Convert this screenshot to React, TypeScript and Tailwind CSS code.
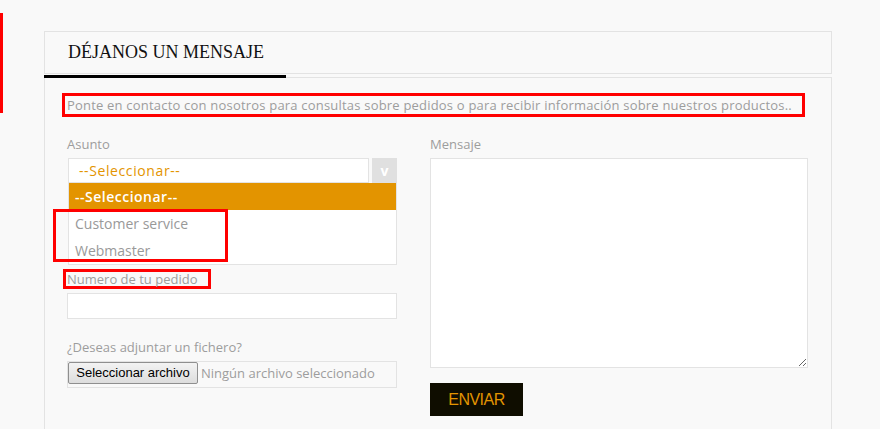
const body = { fontFamily: '"Open Sans", "Noto Sans", sans-serif' };

const Label: React.FC<{ children: React.ReactNode }> = ({ children }) => (
  <div className="h-[18px] text-[13px] leading-[18px] text-[#9d9d9d]" style={body}>
    {children}
  </div>
);

export default function App() {
  return (
    <div className="relative min-h-[429px] bg-[#f9f9f9]">
      {/* annotation line */}
      <div className="absolute left-0 top-[13px] h-[100px] w-[3px] bg-[#ff0000]" />

      <div className="ml-[44px] w-[788px] pt-[31px]">
        <div className="flex h-[43px] items-center border border-[#e3e3e3] pl-[23px]">
          <h2
            className="text-[18px] text-[#111]"
            style={{ fontFamily: '"Liberation Serif", serif' }}
          >
            DÉJANOS UN MENSAJE
          </h2>
        </div>
        <div className="relative z-10 mt-[1px] h-[3px] w-[242px] bg-black" />

        <div className="-mt-[1px] min-h-[360px] border border-[#e3e3e3] pl-[17px] pt-[15px]">
          <div
            className="w-fit border-[3px] border-[#ff0000] pl-[2px] pr-[10px] text-[13px] leading-[18px] tracking-[0.2px] text-[#9d9d9d]"
            style={body}
          >
            Ponte en contacto con nosotros para consultas sobre pedidos o para recibir información sobre nuestros productos..
          </div>

          <div className="mt-[18px] flex gap-[33px] pl-[5px]">
            {/* left column */}
            <div className="flex w-[330px] flex-col">
              <Label>Asunto</Label>
              <div className="mt-[5px] flex h-[25px] pl-[1px]">
                <div
                  className="flex flex-1 items-center border border-[#e3e3e3] bg-white pl-[10px] text-[14px] tracking-[0.6px] text-[#e39400]"
                  style={body}
                >
                  --Seleccionar--
                </div>
                <div className="ml-[3px] flex w-[25px] items-center justify-center bg-[#e0e0e0] text-[14px] font-bold text-white" style={body}>
                  v
                </div>
              </div>
              <div className="relative ml-[1px] border border-t-0 border-[#e3e3e3] bg-white text-[14px]" style={body}>
                <div className="flex h-[27px] items-center bg-[#e39400] pl-[6px] font-semibold tracking-[0.5px] text-white">
                  --Seleccionar--
                </div>
                <div className="flex h-[27px] items-center pl-[6px] text-[#999]">Customer service</div>
                <div className="flex h-[27px] items-center pl-[6px] text-[#999]">Webmaster</div>
                <div className="absolute left-[-16px] top-[26px] h-[53px] w-[175px] border-[3px] border-[#ff0000]" />
              </div>

              <div className="mt-[4px] -ml-[4px] w-fit border-[3px] border-[#ff0000] pl-[1px] pr-[11px]">
                <div className="h-[14px] text-[13px] leading-[14px] text-[#9d9d9d]" style={body}>
                  Numero de tu pedido
                </div>
              </div>
              <div className="mt-[4px] h-[26px] border border-[#e3e3e3] bg-white" />

              <div className="mt-[19px]">
                <Label>¿Deseas adjuntar un fichero?</Label>
              </div>
              <div className="mt-[5px] flex h-[27px] items-start border border-[#e3e3e3] bg-[#f9f9f9]">
                <div
                  className="flex h-[22px] w-[130px] items-center justify-center rounded-[2px] border border-[#8f8f8f] bg-gradient-to-b from-[#f3f3f3] to-[#dddddd] text-[13px] text-black"
                  style={{ fontFamily: '"Liberation Sans", Arial, sans-serif' }}
                >
                  Seleccionar archivo
                </div>
                <div className="ml-[3px] flex h-[24px] items-center text-[13px] text-[#9d9d9d]" style={body}>
                  Ningún archivo seleccionado
                </div>
              </div>
            </div>

            {/* right column */}
            <div className="flex w-[378px] flex-col">
              <Label>Mensaje</Label>
              <textarea className="mt-[5px] h-[210px] w-[378px] border border-[#e3e3e3] bg-white outline-none" />
              <button
                className="mt-[15px] flex h-[33px] w-[93px] items-center justify-center bg-[#0f0d00] text-[16px] tracking-[-0.5px] text-[#e39400]"
                style={{ fontFamily: '"Liberation Sans", Arial, sans-serif' }}
              >
                ENVIAR
              </button>
            </div>
          </div>
        </div>
      </div>
    </div>
  );
}
